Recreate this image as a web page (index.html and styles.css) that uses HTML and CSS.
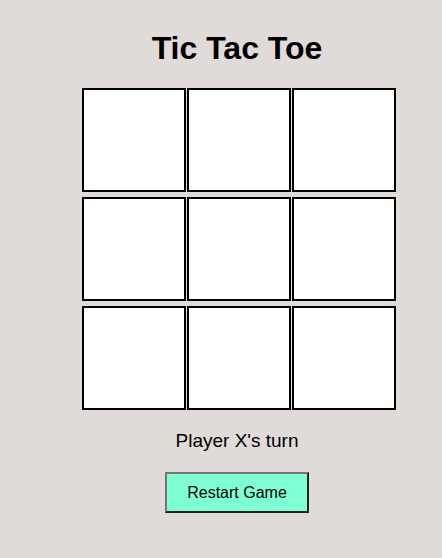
FILE: index.html
```html
<!DOCTYPE html>
<html lang="en">
<head>
    <meta charset="UTF-8">
    <meta name="viewport" content="width=device-width, initial-scale=1.0">
    <title>Tic Tac Toe</title>
    <link rel="stylesheet" href="styles.css">
</head>
<body>
    <div class="game">
        <h1 class="game-title">Tic Tac Toe</h1>

        <div class="board" id="board">
            <div class="cell" data-index="0"></div>
            <div class="cell" data-index="1"></div>
            <div class="cell" data-index="2"></div>
            <div class="cell" data-index="3"></div>
            <div class="cell" data-index="4"></div>
            <div class="cell" data-index="5"></div>
            <div class="cell" data-index="6"></div>
            <div class="cell" data-index="7"></div>
            <div class="cell" data-index="8"></div>
        </div>

        <p class="status" id="status">Player X's turn</p>

        <button class="restart-button" id="restartButton">Restart Game</button>
    </div>

    <script>
        const cells = document.querySelectorAll('.cell');
        const statusText = document.getElementById('status');
        let board = Array(9).fill('');
        let current = 'X';
        let finished = false;

        const lines = [
            [0, 1, 2], [3, 4, 5], [6, 7, 8],
            [0, 3, 6], [1, 4, 7], [2, 5, 8],
            [0, 4, 8], [2, 4, 6]
        ];

        function winner() {
            for (const [a, b, c] of lines) {
                if (board[a] && board[a] === board[b] && board[a] === board[c]) {
                    return board[a];
                }
            }
            return null;
        }

        cells.forEach(cell => {
            cell.addEventListener('click', function() {
                const i = this.dataset.index;
                if (finished || board[i]) return;

                board[i] = current;
                this.textContent = current;

                const win = winner();
                if (win) {
                    statusText.textContent = `Player ${win} wins!`;
                    finished = true;
                } else if (board.every(v => v)) {
                    statusText.textContent = "It's a draw!";
                    finished = true;
                } else {
                    current = current === 'X' ? 'O' : 'X';
                    statusText.textContent = `Player ${current}'s turn`;
                }
            });
        });

        // リスタート
        document.getElementById('restartButton').addEventListener('click', function() {
            board = Array(9).fill('');
            current = 'X';
            finished = false;
            cells.forEach(cell => cell.textContent = '');
            statusText.textContent = "Player X's turn";
        });
    </script>
</body>
</html>
```

FILE: styles.css
```css
body {
    font-family: "Liberation Sans", Arial, sans-serif;
    background-color: #e0dad9;
    margin: 0;
    padding: 8px 8px 8px 40px;
}

.game {
    display: flex;
    flex-direction: column;
    align-items: center;
}

.game-title {
    font-size: 32px;
    font-weight: bold;
    margin: 22px 0 21px;
}

.board {
    display: grid;
    grid-template-columns: repeat(3, 104px);
    grid-auto-rows: 104px;
    column-gap: 1px;
    row-gap: 5px;
    margin-left: 4px;
}

.cell {
    box-sizing: border-box;
    background-color: white;
    border: 2px solid black;
    display: flex;
    justify-content: center;
    align-items: center;
    font-size: 48px;
    font-weight: bold;
    cursor: pointer;
}

.status {
    font-size: 19px;
    margin: 20px 0 20px;
}

.restart-button {
    font-family: "Liberation Sans", Arial, sans-serif;
    font-size: 16px;
    padding: 10px 20px;
    height: 41px;
    background-color: aquamarine;
    border: 2px outset #767676;
    cursor: pointer;
}
```
